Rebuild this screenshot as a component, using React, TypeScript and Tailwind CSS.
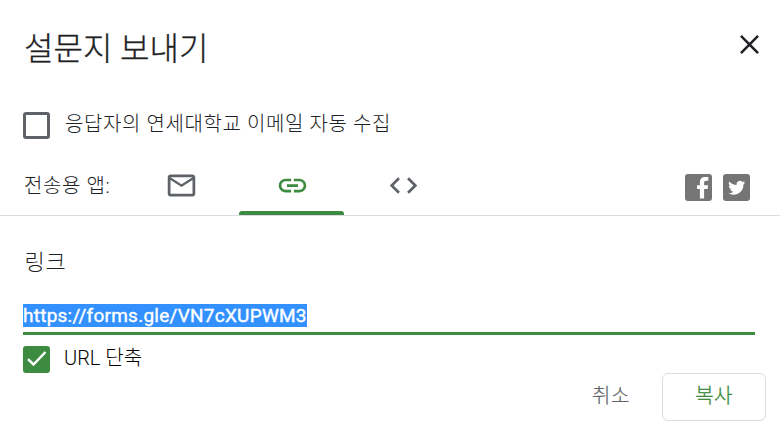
import type { ReactNode } from "react";

function Icon({ d, className }: { d: string; className: string }) {
  return (
    <svg viewBox="0 0 24 24" className={className} fill="currentColor">
      <path d={d} />
    </svg>
  );
}

const MAIL =
  "M22 6c0-1.1-.9-2-2-2H4c-1.1 0-2 .9-2 2v12c0 1.1.9 2 2 2h16c1.1 0 2-.9 2-2V6zm-2 0l-8 5-8-5h16zm0 12H4V8l8 5 8-5v10z";
const LINK =
  "M3.9 12c0-1.71 1.39-3.1 3.1-3.1h4V7H7c-2.76 0-5 2.24-5 5s2.24 5 5 5h4v-1.9H7c-1.71 0-3.1-1.39-3.1-3.1zM8 13h8v-2H8v2zm9-6h-4v1.9h4c1.71 0 3.1 1.39 3.1 3.1s-1.39 3.1-3.1 3.1h-4V17h4c2.76 0 5-2.24 5-5s-2.24-5-5-5z";
const CODE =
  "M9.4 16.6L4.8 12l4.6-4.6L8 6l-6 6 6 6 1.4-1.4zm5.2 0l4.6-4.6-4.6-4.6L16 6l6 6-6 6-1.4-1.4z";

function Tab({ active, children }: { active?: boolean; children: ReactNode }) {
  return (
    <button
      className={
        active
          ? "flex h-full w-[105px] flex-col items-center text-[#3d8b40]"
          : "flex h-full w-[105px] flex-col items-center text-[#5f6368]"
      }
    >
      <span className="flex h-[56px] shrink-0 items-center pt-[5px]">{children}</span>
      {active && <span className="h-1 w-full rounded-t-[3px] bg-[#3d8b40]" />}
    </button>
  );
}

export default function App() {
  return (
    <div className="flex h-[435px] w-[780px] flex-col overflow-hidden bg-white font-['Roboto','Noto_Sans_CJK_KR',sans-serif] font-light text-[#202124]">
      <header className="flex h-[95px] items-center justify-between pr-[21px] pl-6">
        <h1 className="mt-0.5 text-[32px] leading-[48px] whitespace-nowrap [-webkit-text-stroke:0.3px]">
          설문지 보내기
        </h1>
        <svg viewBox="0 0 20 20" className="mb-[7px] size-[19px]" fill="none" stroke="currentColor" strokeWidth="2.7">
          <path d="M1 1 19 19M19 1 1 19" />
        </svg>
      </header>

      <label className="flex h-[60px] items-center gap-[15px] pl-[23px]">
        <span className="size-[27px] rounded-[3px] border-3 border-[#5f6368]" />
        <span className="mb-0.5 text-[20px] tracking-[0.6px] whitespace-nowrap">
          응답자의 연세대학교 이메일 자동 수집
        </span>
      </label>

      <nav className="flex h-[61px] items-center border-b border-[#dadce0] pl-6">
        <span className="w-[104px] pt-0.5 text-[20px] tracking-[0.6px] whitespace-nowrap">전송용 앱:</span>
        <div className="flex h-full gap-1.5">
          <Tab>
            <Icon d={MAIL} className="ml-0.5 size-[33px]" />
          </Tab>
          <Tab active>
            <Icon d={LINK} className="ml-px size-[33px]" />
          </Tab>
          <Tab>
            <Icon d={CODE} className="ml-px size-[33px]" />
          </Tab>
        </div>
        <div className="ml-auto flex gap-[11px] pt-[5px] pr-[30.5px]">
          <svg viewBox="0 0 27 27" className="size-[27px]">
            <rect width="27" height="27" rx="3" fill="#757575" />
            <path
              fill="#fff"
              d="M14.9 24.5V15h-2.9v-3.8h2.9V8.5c0-3.7 2-5.5 5.2-5.5h3.2v3.7h-2c-1.7 0-2.2.7-2.2 2v2.5h4l-.5 3.8h-3.5v9.5z"
            />
          </svg>
          <svg viewBox="0 0 27 27" className="size-[27px]">
            <rect width="27" height="27" rx="3" fill="#757575" />
            <path
              fill="#fff"
              transform="translate(5.2 5.2) scale(.71)"
              d="M23.95 4.57a10 10 0 0 1-2.82.78 4.96 4.96 0 0 0 2.16-2.73c-.95.56-2 .96-3.13 1.19a4.92 4.92 0 0 0-8.38 4.48C7.69 8.1 4.07 6.13 1.64 3.16a4.92 4.92 0 0 0 1.52 6.57 4.9 4.9 0 0 1-2.23-.61v.06a4.92 4.92 0 0 0 3.95 4.83 5 5 0 0 1-2.21.08 4.94 4.94 0 0 0 4.6 3.42A9.87 9.87 0 0 1 0 19.54a13.99 13.99 0 0 0 7.55 2.21c9.05 0 14-7.5 14-13.98l-.02-.64a9.94 9.94 0 0 0 2.42-2.56z"
            />
          </svg>
        </div>
      </nav>

      <main className="flex flex-col pl-[23px]">
        <h2 className="mt-[30px] h-[33px] pl-[1.5px] text-[22px] leading-[34px] tracking-[0.8px]">링크</h2>
        <div className="mt-[25px] flex h-[31px] w-[732px] items-start border-b-3 border-[#3d8b40]">
          <span className="block h-[23px] w-[284px] bg-[#3390ff] text-[19px] leading-[23px] font-normal tracking-[0.25px] whitespace-nowrap text-white [-webkit-text-stroke:0.4px]">
            https://forms.gle/VN7cXUPWM3
          </span>
        </div>
        <label className="mt-[11px] flex h-[27px] items-center gap-[14px]">
          <svg viewBox="0 0 27 27" className="size-[27px]">
            <rect width="27" height="27" rx="3" fill="#3d8b40" />
            <path d="M5 13.2 10.5 18.5 22.5 6" fill="none" stroke="#fff" strokeWidth="2.5" />
          </svg>
          <span className="mb-[3px] text-[20px] text-black">URL 단축</span>
        </label>
      </main>

      <footer className="flex items-center justify-end pr-[14px]">
        <button className="mr-8 mb-0.5 text-[20px] tracking-[0.6px] text-[#5f6368] [-webkit-text-stroke:0.2px]">
          취소
        </button>
        <button className="h-12 w-[104px] rounded-[6px] border border-[#dadce0] pb-0.5 text-[20px] tracking-[0.4px] text-[#3d8b40] [-webkit-text-stroke:0.3px]">
          복사
        </button>
      </footer>
    </div>
  );
}
